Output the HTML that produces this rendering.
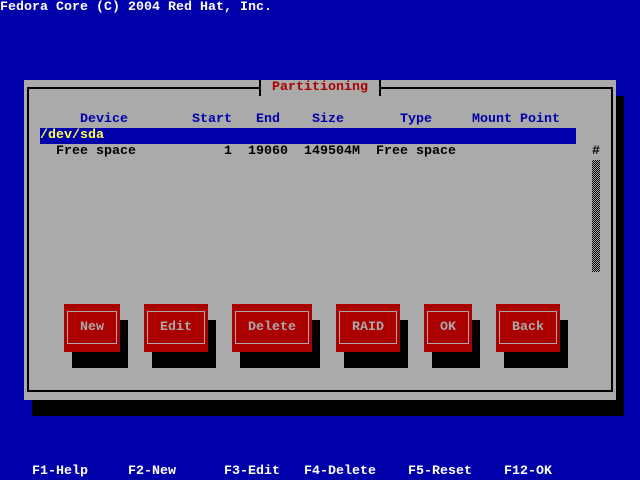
<!DOCTYPE html>
<html><head><style>
body{margin:0;width:640px;height:480px;background:#0000aa;position:relative;overflow:hidden;font-family:"Liberation Mono",monospace;font-size:13.33px;font-weight:bold;}
.t{position:absolute;white-space:pre;line-height:16px;height:16px;}
.b{position:absolute;}
</style></head><body>
<div class="t" style="left:0;top:0;color:#fff">Fedora Core (C) 2004 Red Hat, Inc.</div>
<!-- shadow -->
<div class="b" style="left:32px;top:400px;width:592px;height:16px;background:#000"></div>
<div class="b" style="left:616px;top:96px;width:8px;height:320px;background:#000"></div>
<!-- window -->
<div class="b" style="left:24px;top:80px;width:592px;height:320px;background:#aaa"></div>
<div class="b" style="left:27px;top:87px;width:586px;height:305px;border:2px solid #000;box-sizing:border-box"></div>
<div class="b" style="left:256px;top:80px;width:128px;height:16px;background:#aaa"></div>
<div class="b" style="left:259px;top:80px;width:2px;height:16px;background:#000"></div>
<div class="b" style="left:379px;top:80px;width:2px;height:16px;background:#000"></div>
<div class="b" style="left:379px;top:87px;width:8px;height:2px;background:#000"></div>
<div class="b" style="left:253px;top:87px;width:8px;height:2px;background:#000"></div>
<div class="t" style="left:272px;top:80px;color:#aa0000">Partitioning</div>
<!-- header -->
<div class="t" style="left:80px;top:112px;color:#0000aa">Device</div>
<div class="t" style="left:192px;top:112px;color:#0000aa">Start</div>
<div class="t" style="left:256px;top:112px;color:#0000aa">End</div>
<div class="t" style="left:312px;top:112px;color:#0000aa">Size</div>
<div class="t" style="left:400px;top:112px;color:#0000aa">Type</div>
<div class="t" style="left:472px;top:112px;color:#0000aa">Mount Point</div>
<div class="b" style="left:40px;top:128px;width:536px;height:16px;background:#0000aa"></div>
<div class="t" style="left:40px;top:128px;color:#ffff55">/dev/sda</div>
<div class="t" style="left:56px;top:144px;color:#000">Free space</div>
<div class="t" style="left:224px;top:144px;color:#000">1</div>
<div class="t" style="left:248px;top:144px;color:#000">19060</div>
<div class="t" style="left:304px;top:144px;color:#000">149504M</div>
<div class="t" style="left:376px;top:144px;color:#000">Free space</div>
<div class="t" style="left:592px;top:144px;color:#000">#</div>
<div class="b" style="left:592px;top:160px;width:8px;height:112px;background:repeating-conic-gradient(#000 0 25%,#aaa 0 50%) 0 0/2px 2px"></div>
<!-- buttons -->
<div class="b" style="left:72px;top:320px;width:56px;height:48px;background:#000"></div>
<div class="b" style="left:64px;top:304px;width:56px;height:48px;background:#aa0000"></div>
<div class="b" style="left:67px;top:311px;width:50px;height:33px;border:1px solid #aaa;box-sizing:border-box"></div>
<div class="t" style="left:80px;top:320px;color:#aaa">New</div>

<div class="b" style="left:152px;top:320px;width:64px;height:48px;background:#000"></div>
<div class="b" style="left:144px;top:304px;width:64px;height:48px;background:#aa0000"></div>
<div class="b" style="left:147px;top:311px;width:58px;height:33px;border:1px solid #aaa;box-sizing:border-box"></div>
<div class="t" style="left:160px;top:320px;color:#aaa">Edit</div>

<div class="b" style="left:240px;top:320px;width:80px;height:48px;background:#000"></div>
<div class="b" style="left:232px;top:304px;width:80px;height:48px;background:#aa0000"></div>
<div class="b" style="left:235px;top:311px;width:74px;height:33px;border:1px solid #aaa;box-sizing:border-box"></div>
<div class="t" style="left:248px;top:320px;color:#aaa">Delete</div>

<div class="b" style="left:344px;top:320px;width:64px;height:48px;background:#000"></div>
<div class="b" style="left:336px;top:304px;width:64px;height:48px;background:#aa0000"></div>
<div class="b" style="left:339px;top:311px;width:58px;height:33px;border:1px solid #aaa;box-sizing:border-box"></div>
<div class="t" style="left:352px;top:320px;color:#aaa">RAID</div>

<div class="b" style="left:432px;top:320px;width:48px;height:48px;background:#000"></div>
<div class="b" style="left:424px;top:304px;width:48px;height:48px;background:#aa0000"></div>
<div class="b" style="left:427px;top:311px;width:42px;height:33px;border:1px solid #aaa;box-sizing:border-box"></div>
<div class="t" style="left:440px;top:320px;color:#aaa">OK</div>

<div class="b" style="left:504px;top:320px;width:64px;height:48px;background:#000"></div>
<div class="b" style="left:496px;top:304px;width:64px;height:48px;background:#aa0000"></div>
<div class="b" style="left:499px;top:311px;width:58px;height:33px;border:1px solid #aaa;box-sizing:border-box"></div>
<div class="t" style="left:512px;top:320px;color:#aaa">Back</div>
<!-- footer -->
<div class="t" style="left:32px;top:464px;color:#fff">F1-Help</div>
<div class="t" style="left:128px;top:464px;color:#fff">F2-New</div>
<div class="t" style="left:224px;top:464px;color:#fff">F3-Edit</div>
<div class="t" style="left:304px;top:464px;color:#fff">F4-Delete</div>
<div class="t" style="left:408px;top:464px;color:#fff">F5-Reset</div>
<div class="t" style="left:504px;top:464px;color:#fff">F12-OK</div>
</body></html>
